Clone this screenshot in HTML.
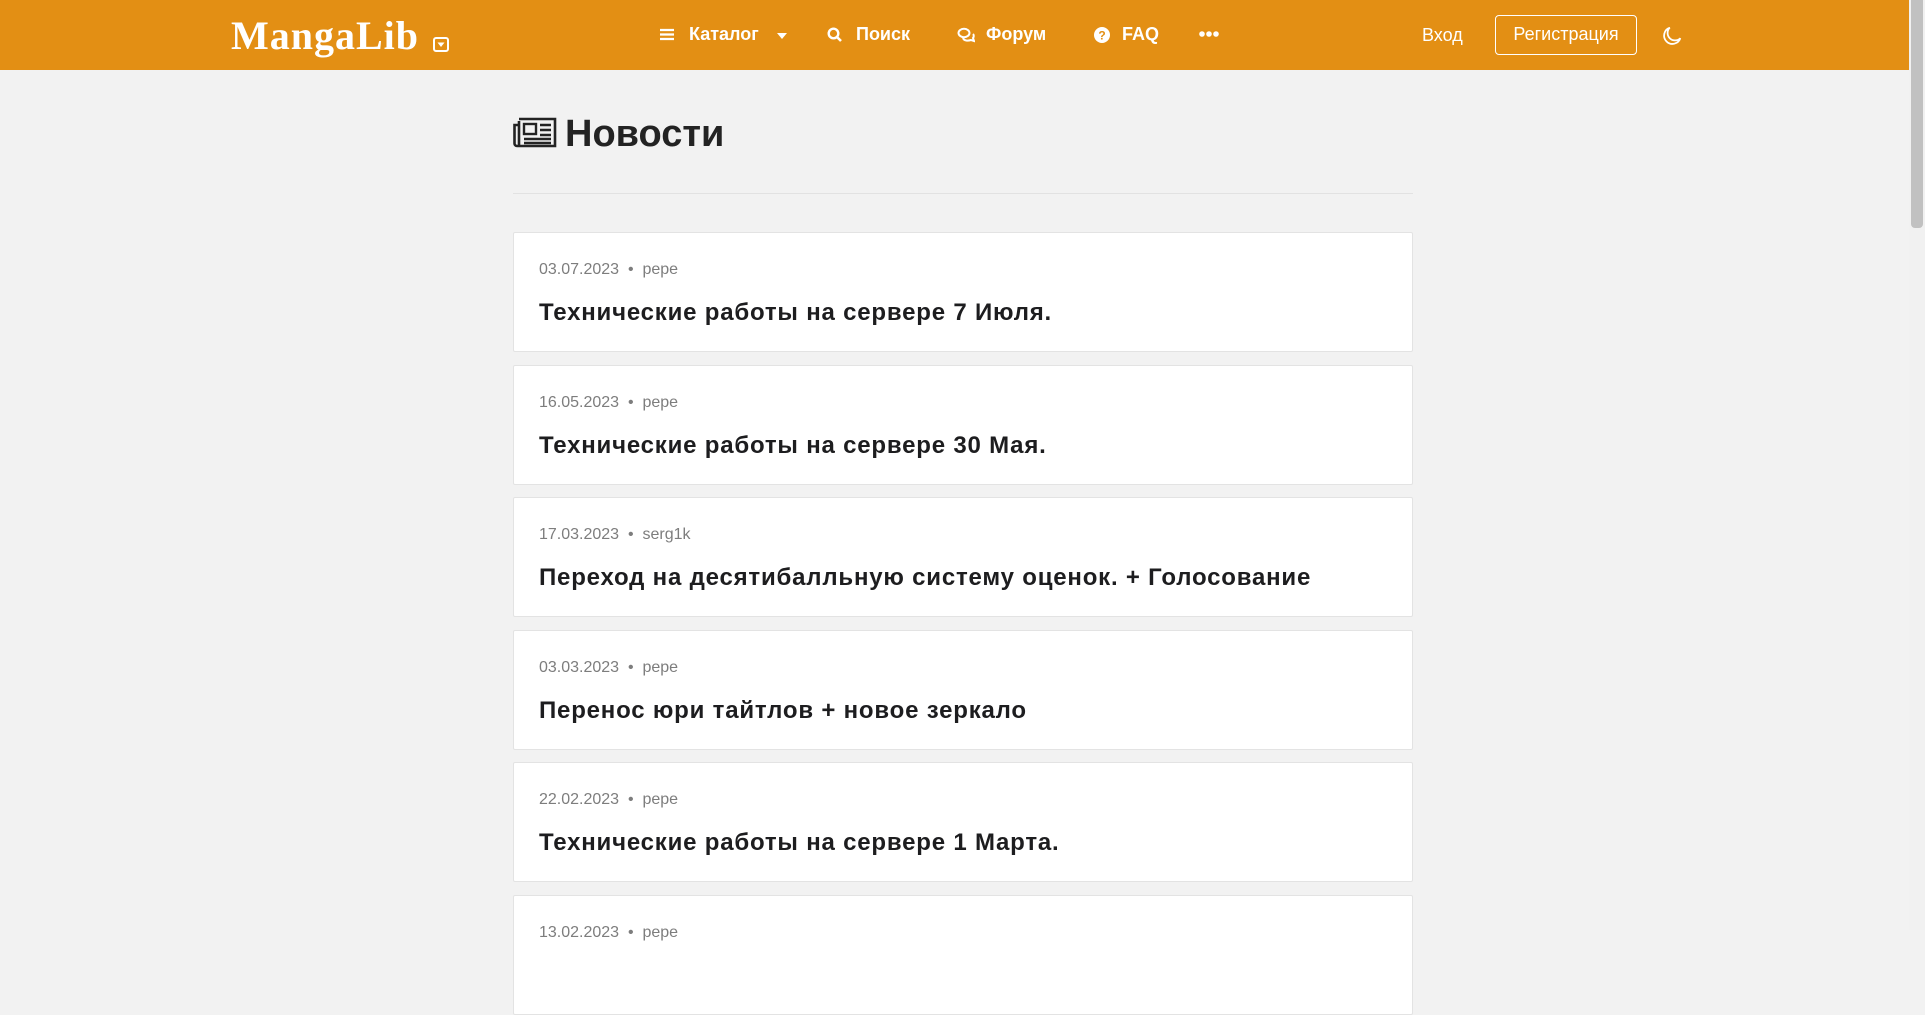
<!DOCTYPE html>
<html><head><meta charset="utf-8"><style>
*{box-sizing:border-box;margin:0;padding:0}
body{width:1925px;height:930px;overflow:hidden;background:#f2f2f2;font-family:"Liberation Sans",sans-serif;position:relative}
.hdr{position:absolute;left:0;top:0;width:1909px;height:70px;background:#e38f14;color:#fff}
.a{position:absolute;white-space:nowrap}
.nav{font-weight:bold;font-size:18px;top:24px}
.sb{position:absolute;right:0;top:0;width:16px;height:930px;background:#f1f1f1}
.sb div{position:absolute;left:2px;top:0;width:12px;height:228px;background:#c1c1c1;border-radius:0 0 4px 4px}
.card{position:absolute;left:513px;width:900px;height:120px;background:#fff;border:1px solid #e3e3e3;border-radius:2px}
.card .m{position:absolute;left:25px;top:28px;font-size:16px;color:#7d7d7d}
.card .t{position:absolute;left:25px;top:66px;font-size:24px;font-weight:bold;color:#1d1d1f;letter-spacing:.8px}
</style></head><body>
<div class="hdr">
<div class="a" style="left:231px;top:12px;font-family:'Liberation Serif',serif;font-weight:bold;font-size:40px;letter-spacing:1px;color:#fff">MangaLib</div>
<svg class="a" style="left:433px;top:37px" width="16" height="15" viewBox="0 0 16 15"><rect x="1" y="1" width="14" height="13" rx="2" fill="none" stroke="#fff" stroke-width="2"/><path d="M4.5 5.5h7L8 10z" fill="#fff"/></svg>
<svg class="a" style="left:660px;top:28px" width="14" height="13"><path d="M0 2h14M0 6.5h14M0 11h14" stroke="#fff" stroke-width="2.2"/></svg>
<div class="a nav" style="left:689px">Каталог</div>
<svg class="a" style="left:777px;top:33px" width="10" height="6"><path d="M0 0h10L5 6z" fill="#fff"/></svg>
<svg class="a" style="left:827px;top:27px" width="16" height="16"><circle cx="6.5" cy="6.5" r="4.8" fill="none" stroke="#fff" stroke-width="2.4"/><path d="M10 10l4 4" stroke="#fff" stroke-width="2.6"/></svg>
<div class="a nav" style="left:856px">Поиск</div>
<svg class="a" style="left:957px;top:27px" width="18" height="16"><ellipse cx="7" cy="6" rx="5.5" ry="4.2" fill="none" stroke="#fff" stroke-width="2"/><path d="M6 11c1 3 5 3 8 2l3 1-1-3c1-1 1-3 0-4" fill="none" stroke="#fff" stroke-width="2"/></svg>
<div class="a nav" style="left:986px">Форум</div>
<svg class="a" style="left:1094px;top:27px" width="16" height="16"><circle cx="8" cy="8" r="8" fill="#fff"/><text x="8" y="12.5" font-size="12" font-weight="bold" text-anchor="middle" fill="#e38f14" font-family="Liberation Sans">?</text></svg>
<div class="a nav" style="left:1122px">FAQ</div>
<svg class="a" style="left:1199px;top:31px" width="20" height="6"><circle cx="3" cy="3" r="2.8" fill="#fff"/><circle cx="10" cy="3" r="2.8" fill="#fff"/><circle cx="17" cy="3" r="2.8" fill="#fff"/></svg>
<div class="a" style="left:1422px;top:25px;font-size:18px">Вход</div>
<div class="a" style="left:1495px;top:15px;width:142px;height:40px;border:1px solid #fff;border-radius:4px;font-size:18px;text-align:center;line-height:36px">Регистрация</div>
<svg class="a" style="left:1662px;top:26px" width="20" height="20" viewBox="0 0 18 18"><path d="M7 1.5A7.5 7.5 0 1 0 16.5 11 6 6 0 0 1 7 1.5z" fill="none" stroke="#fff" stroke-width="1.6"/></svg>
</div>
<div class="sb"><div></div></div>
<svg class="a" style="left:513px;top:117px" width="44" height="31" viewBox="0 0 44 31"><path d="M6 2h36v27H4a2.5 2.5 0 0 1-2.5-2.5V8H6" fill="none" stroke="#232323" stroke-width="2.6"/><path d="M6 4v24" stroke="#232323" stroke-width="2.6"/><rect x="11" y="7" width="12" height="10" fill="none" stroke="#232323" stroke-width="2.4"/><path d="M27 8h11M27 13h11M27 18h11M11 22h27M11 26h27" stroke="#232323" stroke-width="2.4"/></svg>
<div class="a" style="left:565px;top:113px;font-size:38px;font-weight:bold;color:#232323">Новости</div>
<div class="a" style="left:513px;top:193px;width:900px;height:1px;background:#e2e2e2"></div>
<div class="card" style="top:232px"><div class="m">03.07.2023 &nbsp;•&nbsp; pepe</div><div class="t">Технические работы на сервере 7 Июля.</div></div>
<div class="card" style="top:365px"><div class="m">16.05.2023 &nbsp;•&nbsp; pepe</div><div class="t">Технические работы на сервере 30 Мая.</div></div>
<div class="card" style="top:497px"><div class="m">17.03.2023 &nbsp;•&nbsp; serg1k</div><div class="t">Переход на десятибалльную систему оценок. + Голосование</div></div>
<div class="card" style="top:630px"><div class="m">03.03.2023 &nbsp;•&nbsp; pepe</div><div class="t">Перенос юри тайтлов + новое зеркало</div></div>
<div class="card" style="top:762px"><div class="m">22.02.2023 &nbsp;•&nbsp; pepe</div><div class="t">Технические работы на сервере 1 Марта.</div></div>
<div class="card" style="top:895px"><div class="m">13.02.2023 &nbsp;•&nbsp; pepe</div><div class="t"></div></div>
</body></html>
